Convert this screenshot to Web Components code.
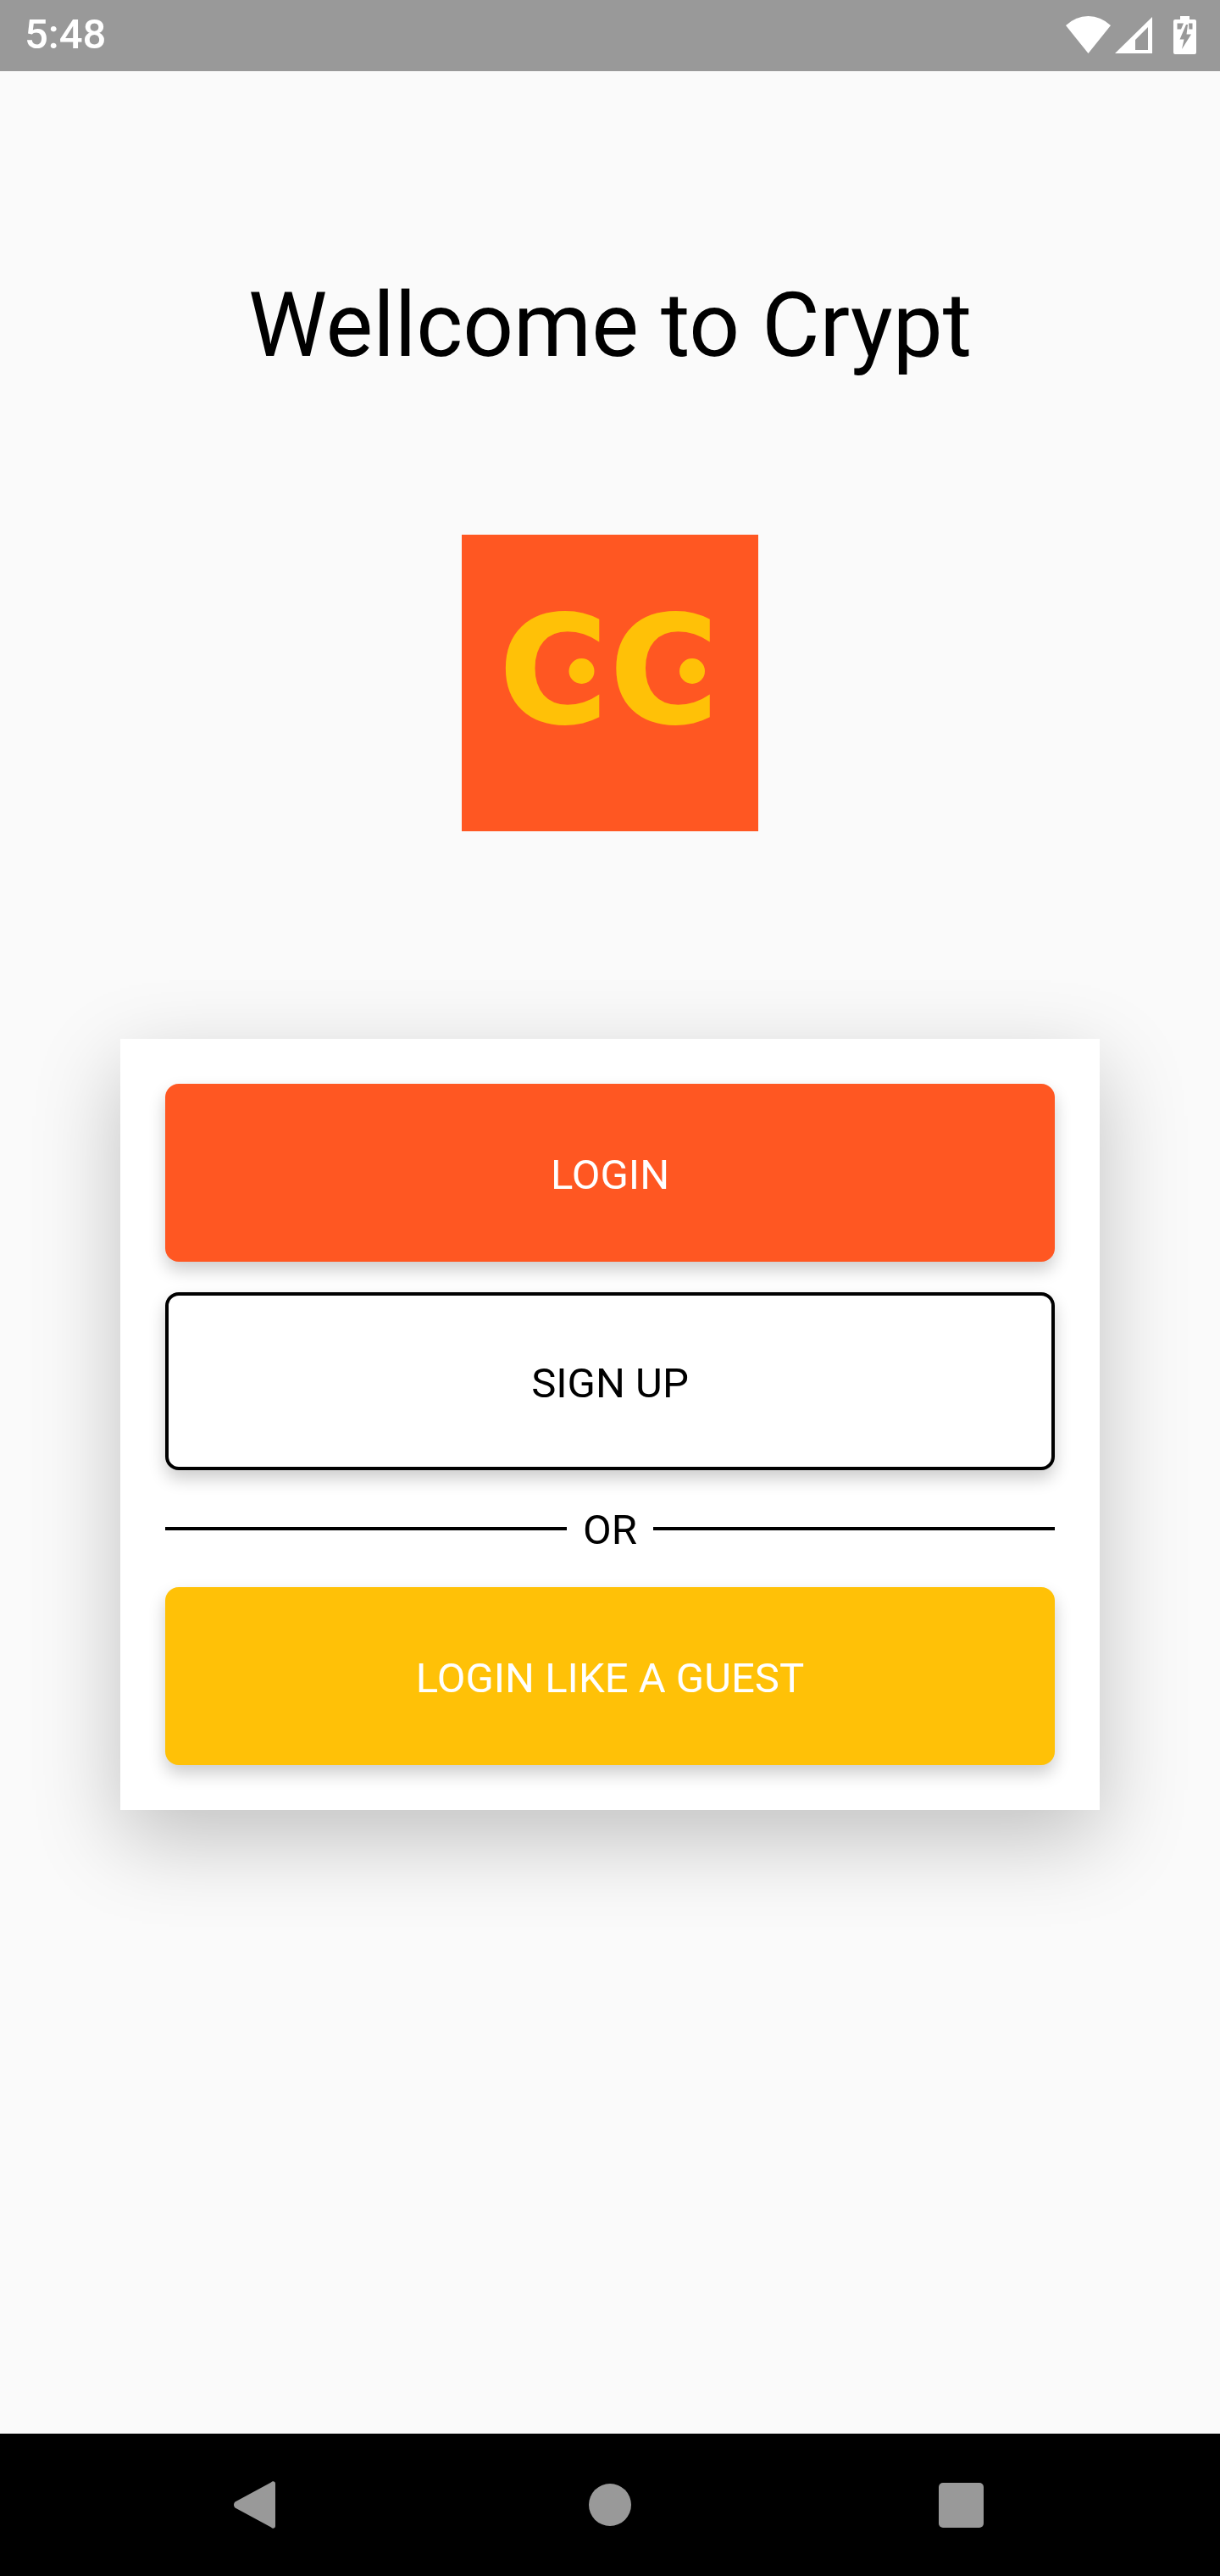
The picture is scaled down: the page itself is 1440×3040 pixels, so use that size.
<!DOCTYPE html>
<html>
<head>
<meta charset="utf-8">
<title>Crypt</title>
<style>
  html, body { margin: 0; padding: 0; }
  body { font-family: Roboto, "Liberation Sans", sans-serif; background: #fafafa; }
</style>
</head>
<body>
<crypt-app>
  <status-bar slot="top" time="5:48"></status-bar>
  <welcome-title>Wellcome to Crypt</welcome-title>
  <crypt-logo></crypt-logo>
  <login-card>
    <action-button kind="primary">LOGIN</action-button>
    <action-button kind="outline">SIGN UP</action-button>
    <or-divider>OR</or-divider>
    <action-button kind="accent">LOGIN LIKE A GUEST</action-button>
  </login-card>
  <nav-bar slot="bottom"></nav-bar>
</crypt-app>

<script>
'use strict';

customElements.define('crypt-app', class extends HTMLElement {
  constructor() {
    super();
    this.root = this.attachShadow({mode: 'open'});
    this.root.innerHTML = `
      <style>
        :host {
          display: flex;
          flex-direction: column;
          width: 1440px;
          height: 3040px;
          background: #fafafa;
          overflow: hidden;
        }

        main {
          flex: 1;
          display: flex;
          flex-direction: column;
          align-items: center;
          padding-top: 239px;
        }
      </style>
      <slot name="top"></slot>
      <main><slot></slot></main>
      <slot name="bottom"></slot>
    `;
  }
});

customElements.define('status-bar', class extends HTMLElement {
  constructor() {
    super();
    this.root = this.attachShadow({mode: 'open'});
    this.root.innerHTML = `
      <style>
        :host {
          display: flex;
          justify-content: space-between;
          box-sizing: border-box;
          height: 84px;
          padding: 0 28px 0 29px;
          background: #999;
          color: #fff;
        }

        .time {
          font: 500 49px/84px Roboto, sans-serif;
          height: 84px;
          margin-top: -1px;
        }

        .icons {
          display: flex;
          align-items: flex-start;
          padding-top: 19px;
        }

        svg { display: block; fill: #fff; }
        .signal { margin: 1px 25px 0 5px; }
      </style>
      <span class="time"></span>
      <div class="icons">
        <svg width="53" height="44" viewBox="0 0 53 44">
          <path d="M0 11A37.5 37.5 0 0 1 53 11L26.5 44Z"/>
        </svg>
        <svg class="signal" width="44" height="43" viewBox="0 0 44 43">
          <path fill-rule="evenodd" d="M0 43L44 0V43ZM24 27V39H39V12Z"/>
        </svg>
        <svg width="27" height="45" viewBox="0 0 27 45">
          <path d="M8 0H19V4H25A2 2 0 0 1 27 6V43A2 2 0 0 1 25 45H2A2 2 0 0 1 0 43V6A2 2 0 0 1 2 4H8Z"/>
          <path fill="#999" d="M4.500 8.500H12L9 15.500H4.500ZM18 8.500H22.500V15.500H18.500ZM15 10L7.500 27.500H12.500L10 39L21 21.500H15.500L17 10Z"/>
        </svg>
      </div>
    `;
  }

  connectedCallback() {
    this.root.querySelector('.time').textContent = this.getAttribute('time');
  }
});

customElements.define('welcome-title', class extends HTMLElement {
  constructor() {
    super();
    this.root = this.attachShadow({mode: 'open'});
    this.root.innerHTML = `
      <style>
        :host {
          display: block;
          font: 400 105px/123px Roboto, sans-serif;
          color: #000;
        }
      </style>
      <slot></slot>
    `;
  }
});

customElements.define('crypt-logo', class extends HTMLElement {
  constructor() {
    super();
    this.root = this.attachShadow({mode: 'open'});
    this.root.innerHTML = `
      <style>
        :host {
          display: block;
          width: 350px;
          height: 350px;
          margin-top: 185px;
        }

        svg { display: block; }
        text { font: 700 178px "DejaVu Sans", sans-serif; fill: #ffc107; }
        circle { fill: #ffc107; }
      </style>
      <svg width="350" height="350" viewBox="0 0 350 350">
        <rect width="350" height="350" fill="#ff5722"/>
        <text x="43" y="222">C</text>
        <text x="173.500" y="222">C</text>
        <circle cx="141.500" cy="161" r="15"/>
        <circle cx="272" cy="161" r="15"/>
      </svg>
    `;
  }
});

customElements.define('login-card', class extends HTMLElement {
  constructor() {
    super();
    this.root = this.attachShadow({mode: 'open'});
    this.root.innerHTML = `
      <style>
        :host {
          display: flex;
          flex-direction: column;
          gap: 36px;
          box-sizing: border-box;
          width: 1156px;
          margin-top: 245px;
          padding: 53px;
          background: #fff;
          box-shadow: 0 34px 96px rgba(0, 0, 0, .23);
        }
      </style>
      <slot></slot>
    `;
  }
});

customElements.define('action-button', class extends HTMLElement {
  constructor() {
    super();
    this.root = this.attachShadow({mode: 'open'});
    this.root.innerHTML = `
      <style>
        :host {
          display: flex;
          align-items: center;
          justify-content: center;
          box-sizing: border-box;
          height: 210px;
          padding-top: 4px;
          border-radius: 16px;
          font: 400 49px/57px Roboto, sans-serif;
          box-shadow: 0 10px 20px rgba(0, 0, 0, .2);
        }

        :host([kind="primary"]) { background: #ff5722; color: #fff; }
        :host([kind="outline"]) { background: #fff; color: #000; border: 4px solid #000; }
        :host([kind="accent"]) { background: #ffc107; color: #fff; }
      </style>
      <slot></slot>
    `;
  }
});

customElements.define('or-divider', class extends HTMLElement {
  constructor() {
    super();
    this.root = this.attachShadow({mode: 'open'});
    this.root.innerHTML = `
      <style>
        :host {
          display: flex;
          align-items: center;
          gap: 19px;
          height: 66px;
          font: 400 49px/57px Roboto, sans-serif;
          color: #000;
        }

        i {
          flex: 1;
          height: 4px;
          background: #000;
        }

        span { padding-top: 3px; }
      </style>
      <i></i><span><slot></slot></span><i></i>
    `;
  }
});

customElements.define('nav-bar', class extends HTMLElement {
  constructor() {
    super();
    this.root = this.attachShadow({mode: 'open'});
    this.root.innerHTML = `
      <style>
        :host {
          display: flex;
          align-items: center;
          box-sizing: border-box;
          height: 168px;
          padding-left: 276px;
          background: #000;
        }

        svg { display: block; fill: #999; }
        .home { margin-left: 370px; }
        .recents { margin-left: 363px; }
      </style>
      <svg width="49" height="56" viewBox="0 0 49 56">
        <path d="M44 1.500C45.500 -.5 49 0 49 3V53C49 56 45.500 56.500 44 54.500L1.500 31.500C-.5 29.500 -.5 26.500 1.500 24.500Z"/>
      </svg>
      <svg class="home" width="50" height="50" viewBox="0 0 50 50">
        <circle cx="25" cy="25" r="25"/>
      </svg>
      <svg class="recents" width="53" height="53" viewBox="0 0 53 53">
        <rect width="53" height="53" rx="5"/>
      </svg>
    `;
  }
});
</script>
</body>
</html>
